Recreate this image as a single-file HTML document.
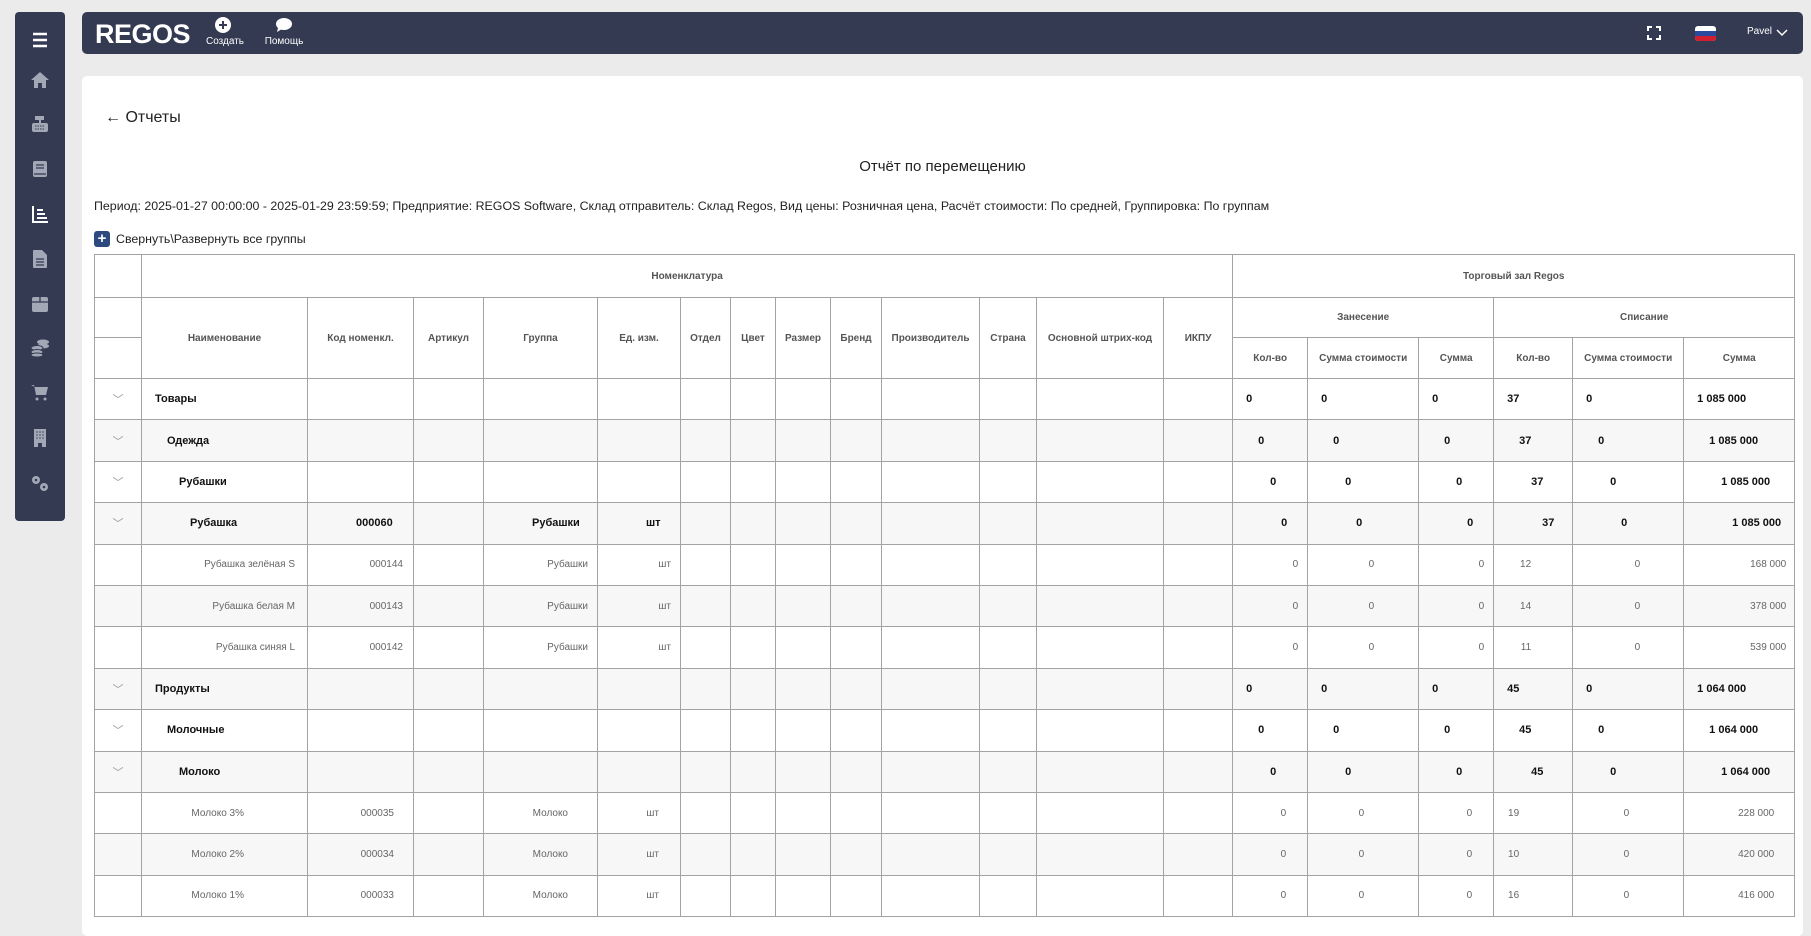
<!DOCTYPE html>
<html><head><meta charset="utf-8">
<style>
*{box-sizing:border-box;margin:0;padding:0}
body{width:1811px;height:927px;overflow:hidden;background:#ebebeb;font-family:"Liberation Sans","Noto Sans CJK SC",sans-serif;color:#222;position:relative}
.side{position:absolute;left:15px;top:12px;width:50px;height:509px;background:#333a52;border-radius:4px}
.side .ic{position:absolute;left:13px;width:24px;height:24px}
.top{position:absolute;left:82px;top:12px;width:1721px;height:42px;background:#333a52;border-radius:5px;color:#fff}
.logo{position:absolute;left:13px;top:7px;font-weight:bold;font-size:27px;letter-spacing:-0.5px;font-family:"Liberation Sans",sans-serif}
.tb{position:absolute;top:5px;font-size:10px;text-align:center;color:#fff}
.card{position:absolute;left:82px;top:76px;width:1721px;height:860px;background:#fff;border-radius:5px}
.back{position:absolute;left:23px;top:33px;font-size:16px;color:#222}
.title{position:absolute;left:0;width:1721px;top:82px;text-align:center;font-size:15px}
.period{position:absolute;left:12px;top:123px;font-size:12.4px}
.coll{position:absolute;left:12px;top:155px;font-size:12.4px;display:flex;align-items:center}
.coll b{display:inline-block;width:16px;height:16px;background:#2d4a80;color:#fff;border-radius:3px;text-align:center;line-height:16px;font-size:15px;margin-right:6px}
table{position:absolute;left:12px;top:178px;border-collapse:collapse;table-layout:fixed;width:1700px}
td,th{border:1px solid #a3a3a3;font-size:10px;overflow:hidden;white-space:nowrap}
th{font-weight:bold;color:#555;font-size:10px;text-align:center}
tr.h1{height:43px}tr.h2{height:40px}tr.h3{height:41px}
tbody tr{height:41.4px}
tbody tr:nth-child(even){background:#f7f7f7}
.g td{font-weight:bold;font-size:11px;color:#111;text-align:left}
.g td.c{color:#999;text-align:center;font-weight:normal}
.i td{color:#666;text-align:right}
.l0 td:not(.c){padding-left:13px}
.l1 td:not(.c){padding-left:25px}
.l2 td:not(.c){padding-left:37px}
.l3 td:not(.c){padding-left:48px}
</style></head><body>
<div class="side">
 <svg class="ic" style="top:16px" viewBox="0 0 24 24"><path d="M5 6h14M5 12h14M5 18h14" stroke="#fff" stroke-width="2.4"/></svg>
 <svg class="ic" style="top:56px" viewBox="0 0 24 24"><path d="M12 4L3 12h3v8h4v-5h4v5h4v-8h3z" fill="#a3a8b6"/></svg>
 <svg class="ic" style="top:100px" viewBox="0 0 24 24"><rect x="7" y="4" width="9" height="4" fill="#a3a8b6"/><rect x="11" y="8" width="2" height="3" fill="#a3a8b6"/><rect x="4" y="11" width="16" height="9" rx="2" fill="#a3a8b6"/><path d="M7 14h10M7 17h10" stroke="#333a52" stroke-width="1" stroke-dasharray="1.5 1"/></svg>
 <svg class="ic" style="top:145px" viewBox="0 0 24 24"><rect x="5" y="4" width="14" height="16" rx="2" fill="#a3a8b6"/><path d="M8 8h8M8 11h8M6 17h12" stroke="#333a52" stroke-width="1.3"/></svg>
 <svg class="ic" style="top:190px" viewBox="0 0 24 24"><path d="M5 4v16h15" stroke="#fff" stroke-width="2" fill="none"/><path d="M9 8h6M9 12h8M9 16h10" stroke="#fff" stroke-width="2"/></svg>
 <svg class="ic" style="top:235px" viewBox="0 0 24 24"><path d="M6 3h8l5 5v12a1 1 0 0 1-1 1H6a1 1 0 0 1-1-1V4a1 1 0 0 1 1-1z" fill="#a3a8b6"/><path d="M8 12h8M8 15h8M8 18h8" stroke="#333a52" stroke-width="1.2"/></svg>
 <svg class="ic" style="top:280px" viewBox="0 0 24 24"><rect x="4" y="5" width="16" height="15" rx="2" fill="#a3a8b6"/><path d="M4 10h16M12 5v5" stroke="#333a52" stroke-width="1.3"/></svg>
 <svg class="ic" style="top:323px" viewBox="0 0 24 24" fill="#a3a8b6"><ellipse cx="15" cy="7" rx="6" ry="2.5"/><ellipse cx="15" cy="11" rx="6" ry="2.5"/><ellipse cx="9" cy="13" rx="6" ry="2.5" stroke="#333a52"/><ellipse cx="9" cy="17" rx="6" ry="2.5" stroke="#333a52"/><ellipse cx="9" cy="20" rx="6" ry="2" stroke="#333a52"/></svg>
 <svg class="ic" style="top:368px" viewBox="0 0 24 24"><path d="M3 5h3l2 10h10l2-8H7" fill="#a3a8b6"/><circle cx="9" cy="19" r="1.5" fill="#a3a8b6"/><circle cx="17" cy="19" r="1.5" fill="#a3a8b6"/></svg>
 <svg class="ic" style="top:414px" viewBox="0 0 24 24"><path d="M6 3h12v18h-4v-4h-4v4H6z" fill="#a3a8b6"/><path d="M8.5 6h1M11.5 6h1M14.5 6h1M8.5 9h1M11.5 9h1M14.5 9h1M8.5 12h1M11.5 12h1M14.5 12h1" stroke="#333a52" stroke-width="1.6"/></svg>
 <svg class="ic" style="top:459px" viewBox="0 0 24 24" fill="#a3a8b6"><circle cx="8" cy="9" r="4"/><circle cx="16" cy="16" r="4"/><circle cx="8" cy="9" r="1.3" fill="#333a52"/><circle cx="16" cy="16" r="1.3" fill="#333a52"/></svg>
</div>
<div class="top">
 <div class="logo">REGOS</div>
 <div class="tb" style="left:124px;width:34px"><svg width="16" height="16" viewBox="0 0 16 16" style="display:block;margin:0 auto 3px"><circle cx="8" cy="8" r="8" fill="#fff"/><path d="M8 4v8M4 8h8" stroke="#333a52" stroke-width="2"/></svg>Создать</div>
 <div class="tb" style="left:182px;width:40px"><svg width="18" height="16" viewBox="0 0 18 16" style="display:block;margin:0 auto 3px"><ellipse cx="9" cy="7" rx="8" ry="6" fill="#fff"/><path d="M3 11l-1 4 5-3z" fill="#fff"/></svg>Помощь</div>
 <svg style="position:absolute;left:1565px;top:14px" width="14" height="14" viewBox="0 0 14 14"><path d="M1 5V1h4M9 1h4v4M13 9v4H9M5 13H1V9" stroke="#fff" stroke-width="2" fill="none"/></svg>
 <svg style="position:absolute;left:1613px;top:14px" width="21" height="15" viewBox="0 0 21 15"><rect width="21" height="15" rx="3" fill="#fff"/><rect y="5" width="21" height="5" fill="#2a4aa0"/><path d="M0 10h21v2a3 3 0 0 1-3 3H3a3 3 0 0 1-3-3z" fill="#d02030"/></svg>
 <div style="position:absolute;left:1665px;top:14px;font-size:10px">Pavel</div>
 <svg style="position:absolute;left:1694px;top:17px" width="12" height="8" viewBox="0 0 12 8"><path d="M1 1l5 5 5-5" stroke="#fff" stroke-width="1.5" fill="none"/></svg>
</div>
<div class="card">
 <div class="back">←&nbsp;Отчеты</div>
 <div class="title">Отчёт по перемещению</div>
 <div class="period">Период: 2025-01-27 00:00:00 - 2025-01-29 23:59:59; Предприятие: REGOS Software, Склад отправитель: Склад Regos, Вид цены: Розничная цена, Расчёт стоимости: По средней, Группировка: По группам</div>
 <div class="coll"><b>+</b>Свернуть\Развернуть все группы</div>
 <table>
 <colgroup><col style="width:47px"><col style="width:166px"><col style="width:106px"><col style="width:70px"><col style="width:114px"><col style="width:83px"><col style="width:50px"><col style="width:45px"><col style="width:55px"><col style="width:51px"><col style="width:98px"><col style="width:57px"><col style="width:127px"><col style="width:69px"><col style="width:75px"><col style="width:111px"><col style="width:75px"><col style="width:79px"><col style="width:111px"><col style="width:111px"></colgroup>
 <thead>
 <tr class="h1"><th></th><th colspan="13">Номенклатура</th><th colspan="6">Торговый зал Regos</th></tr>
 <tr class="h2"><th></th><th rowspan="2">Наименование</th><th rowspan="2">Код номенкл.</th><th rowspan="2">Артикул</th><th rowspan="2">Группа</th><th rowspan="2">Ед. изм.</th><th rowspan="2">Отдел</th><th rowspan="2">Цвет</th><th rowspan="2">Размер</th><th rowspan="2">Бренд</th><th rowspan="2">Производитель</th><th rowspan="2">Страна</th><th rowspan="2">Основной штрих-код</th><th rowspan="2">ИКПУ</th><th colspan="3">Занесение</th><th colspan="3">Списание</th></tr>
 <tr class="h3"><th></th><th>Кол-во</th><th>Сумма стоимости</th><th>Сумма</th><th>Кол-во</th><th>Сумма стоимости</th><th>Сумма</th></tr>
 </thead>
 <tbody>
 <tr class="g l0"><td class="c">﹀</td><td>Товары</td><td></td><td></td><td></td><td></td><td></td><td></td><td></td><td></td><td></td><td></td><td></td><td></td><td>0</td><td>0</td><td>0</td><td>37</td><td>0</td><td>1 085 000</td></tr>
 <tr class="g l1"><td class="c">﹀</td><td>Одежда</td><td></td><td></td><td></td><td></td><td></td><td></td><td></td><td></td><td></td><td></td><td></td><td></td><td>0</td><td>0</td><td>0</td><td>37</td><td>0</td><td>1 085 000</td></tr>
 <tr class="g l2"><td class="c">﹀</td><td>Рубашки</td><td></td><td></td><td></td><td></td><td></td><td></td><td></td><td></td><td></td><td></td><td></td><td></td><td>0</td><td>0</td><td>0</td><td>37</td><td>0</td><td>1 085 000</td></tr>
 <tr class="g l3"><td class="c">﹀</td><td>Рубашка</td><td>000060</td><td></td><td>Рубашки</td><td>шт</td><td></td><td></td><td></td><td></td><td></td><td></td><td></td><td></td><td>0</td><td>0</td><td>0</td><td>37</td><td>0</td><td>1 085 000</td></tr>
 <tr class="i"><td></td><td style="padding-right:12px">Рубашка зелёная S</td><td style="padding-right:10px">000144</td><td></td><td style="padding-right:9px">Рубашки</td><td style="padding-right:9px">шт</td><td></td><td></td><td></td><td></td><td></td><td></td><td></td><td></td><td style="padding-right:9px">0</td><td style="padding-right:44px">0</td><td style="padding-right:9px">0</td><td style="padding-right:41px">12</td><td style="padding-right:43px">0</td><td style="padding-right:8px">168 000</td></tr>
 <tr class="i"><td></td><td style="padding-right:12px">Рубашка белая M</td><td style="padding-right:10px">000143</td><td></td><td style="padding-right:9px">Рубашки</td><td style="padding-right:9px">шт</td><td></td><td></td><td></td><td></td><td></td><td></td><td></td><td></td><td style="padding-right:9px">0</td><td style="padding-right:44px">0</td><td style="padding-right:9px">0</td><td style="padding-right:41px">14</td><td style="padding-right:43px">0</td><td style="padding-right:8px">378 000</td></tr>
 <tr class="i"><td></td><td style="padding-right:12px">Рубашка синяя L</td><td style="padding-right:10px">000142</td><td></td><td style="padding-right:9px">Рубашки</td><td style="padding-right:9px">шт</td><td></td><td></td><td></td><td></td><td></td><td></td><td></td><td></td><td style="padding-right:9px">0</td><td style="padding-right:44px">0</td><td style="padding-right:9px">0</td><td style="padding-right:41px">11</td><td style="padding-right:43px">0</td><td style="padding-right:8px">539 000</td></tr>
 <tr class="g l0"><td class="c">﹀</td><td>Продукты</td><td></td><td></td><td></td><td></td><td></td><td></td><td></td><td></td><td></td><td></td><td></td><td></td><td>0</td><td>0</td><td>0</td><td>45</td><td>0</td><td>1 064 000</td></tr>
 <tr class="g l1"><td class="c">﹀</td><td>Молочные</td><td></td><td></td><td></td><td></td><td></td><td></td><td></td><td></td><td></td><td></td><td></td><td></td><td>0</td><td>0</td><td>0</td><td>45</td><td>0</td><td>1 064 000</td></tr>
 <tr class="g l2"><td class="c">﹀</td><td>Молоко</td><td></td><td></td><td></td><td></td><td></td><td></td><td></td><td></td><td></td><td></td><td></td><td></td><td>0</td><td>0</td><td>0</td><td>45</td><td>0</td><td>1 064 000</td></tr>
 <tr class="i"><td></td><td style="padding-right:63px">Молоко 3%</td><td style="padding-right:19px">000035</td><td></td><td style="padding-right:29px">Молоко</td><td style="padding-right:21px">шт</td><td></td><td></td><td></td><td></td><td></td><td></td><td></td><td></td><td style="padding-right:21px">0</td><td style="padding-right:54px">0</td><td style="padding-right:21px">0</td><td style="padding-right:53px">19</td><td style="padding-right:54px">0</td><td style="padding-right:20px">228 000</td></tr>
 <tr class="i"><td></td><td style="padding-right:63px">Молоко 2%</td><td style="padding-right:19px">000034</td><td></td><td style="padding-right:29px">Молоко</td><td style="padding-right:21px">шт</td><td></td><td></td><td></td><td></td><td></td><td></td><td></td><td></td><td style="padding-right:21px">0</td><td style="padding-right:54px">0</td><td style="padding-right:21px">0</td><td style="padding-right:53px">10</td><td style="padding-right:54px">0</td><td style="padding-right:20px">420 000</td></tr>
 <tr class="i"><td></td><td style="padding-right:63px">Молоко 1%</td><td style="padding-right:19px">000033</td><td></td><td style="padding-right:29px">Молоко</td><td style="padding-right:21px">шт</td><td></td><td></td><td></td><td></td><td></td><td></td><td></td><td></td><td style="padding-right:21px">0</td><td style="padding-right:54px">0</td><td style="padding-right:21px">0</td><td style="padding-right:53px">16</td><td style="padding-right:54px">0</td><td style="padding-right:20px">416 000</td></tr>
 </tbody>
 </table>
</div>
</body></html>
